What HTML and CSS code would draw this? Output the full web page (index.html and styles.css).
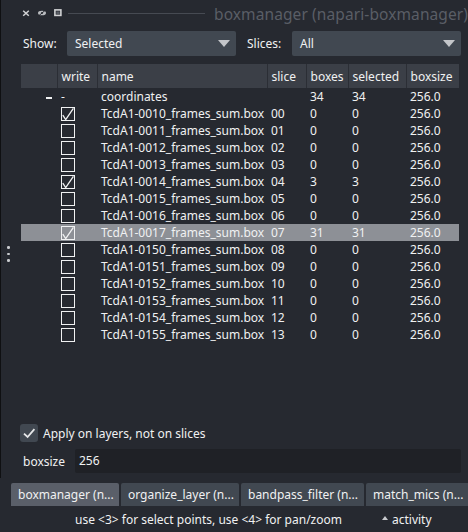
FILE: index.html
```html
<!DOCTYPE html>
<html>
<head>
<meta charset="utf-8">
<link rel="stylesheet" href="styles.css">
</head>
<body>
<div class="app">
  <div class="dock">
    <div class="titlebar">
      <svg class="tb-ic tb-close" width="8" height="8" viewBox="0 0 8 8"><path d="M1.2 1.8L6.8 6.8M6.8 1.8L1.2 6.8" stroke="#d1d2d4" stroke-width="1.5"/></svg>
      <svg class="tb-ic tb-eye" width="10" height="8" viewBox="0 0 10 8"><ellipse cx="5" cy="4" rx="4" ry="2.3" fill="#b9bbbf"/><path d="M2 6.5L8 1.5" stroke="#262930" stroke-width="1"/><circle cx="5" cy="4" r="1" fill="#262930"/></svg>
      <svg class="tb-ic tb-float" width="8" height="8" viewBox="0 0 8 8"><rect x="0.9" y="0.9" width="6" height="5.5" fill="none" stroke="#d1d2d4" stroke-width="1.6"/><rect x="2.3" y="2.4" width="3.4" height="2.6" fill="#5a5e66"/></svg>
      <span class="tb-line"></span>
      <span class="tb-title">boxmanager (napari-boxmanager)</span>
    </div>

    <div class="filters">
      <span class="lbl">Show:</span>
      <div class="combo"><span class="combo-text">Selected</span><i class="arrow"></i></div>
      <span class="lbl lbl2">Slices:</span>
      <div class="combo"><span class="combo-text">All</span><i class="arrow"></i></div>
    </div>

    <table class="grid">
      <colgroup>
        <col class="c-vh"><col class="c-write"><col class="c-name"><col class="c-slice"><col class="c-boxes"><col class="c-sel"><col class="c-size">
      </colgroup>
      <thead>
        <tr><th></th><th>write</th><th>name</th><th>slice</th><th>boxes</th><th>selected</th><th>boxsize</th></tr>
      </thead>
      <tbody>
        <tr><td class="vh"><span class="minus"></span></td><td>-</td><td>coordinates</td><td></td><td>34</td><td>34</td><td>256.0</td></tr>
        <tr><td class="vh"></td><td><span class="cb"><svg width="14" height="14" viewBox="0 0 14 14"><path d="M1.8 8.2L4.7 12.5L12.4 1.4" fill="none" stroke="#f0f1f2" stroke-width="1.3"/></svg></span></td><td>TcdA1-0010_frames_sum.box</td><td>00</td><td>0</td><td>0</td><td>256.0</td></tr>
        <tr><td class="vh"></td><td><span class="cb"></span></td><td>TcdA1-0011_frames_sum.box</td><td>01</td><td>0</td><td>0</td><td>256.0</td></tr>
        <tr><td class="vh"></td><td><span class="cb"></span></td><td>TcdA1-0012_frames_sum.box</td><td>02</td><td>0</td><td>0</td><td>256.0</td></tr>
        <tr><td class="vh"></td><td><span class="cb"></span></td><td>TcdA1-0013_frames_sum.box</td><td>03</td><td>0</td><td>0</td><td>256.0</td></tr>
        <tr><td class="vh"></td><td><span class="cb"><svg width="14" height="14" viewBox="0 0 14 14"><path d="M1.8 8.2L4.7 12.5L12.4 1.4" fill="none" stroke="#f0f1f2" stroke-width="1.3"/></svg></span></td><td>TcdA1-0014_frames_sum.box</td><td>04</td><td>3</td><td>3</td><td>256.0</td></tr>
        <tr><td class="vh"></td><td><span class="cb"></span></td><td>TcdA1-0015_frames_sum.box</td><td>05</td><td>0</td><td>0</td><td>256.0</td></tr>
        <tr><td class="vh"></td><td><span class="cb"></span></td><td>TcdA1-0016_frames_sum.box</td><td>06</td><td>0</td><td>0</td><td>256.0</td></tr>
        <tr class="selected"><td class="vh"></td><td><span class="cb"><svg width="14" height="14" viewBox="0 0 14 14"><path d="M1.8 8.2L4.7 12.5L12.4 1.4" fill="none" stroke="#f0f1f2" stroke-width="1.3"/></svg></span></td><td>TcdA1-0017_frames_sum.box</td><td>07</td><td>31</td><td>31</td><td>256.0</td></tr>
        <tr><td class="vh"></td><td><span class="cb"></span></td><td>TcdA1-0150_frames_sum.box</td><td>08</td><td>0</td><td>0</td><td>256.0</td></tr>
        <tr><td class="vh"></td><td><span class="cb"></span></td><td>TcdA1-0151_frames_sum.box</td><td>09</td><td>0</td><td>0</td><td>256.0</td></tr>
        <tr><td class="vh"></td><td><span class="cb"></span></td><td>TcdA1-0152_frames_sum.box</td><td>10</td><td>0</td><td>0</td><td>256.0</td></tr>
        <tr><td class="vh"></td><td><span class="cb"></span></td><td>TcdA1-0153_frames_sum.box</td><td>11</td><td>0</td><td>0</td><td>256.0</td></tr>
        <tr><td class="vh"></td><td><span class="cb"></span></td><td>TcdA1-0154_frames_sum.box</td><td>12</td><td>0</td><td>0</td><td>256.0</td></tr>
        <tr><td class="vh"></td><td><span class="cb"></span></td><td>TcdA1-0155_frames_sum.box</td><td>13</td><td>0</td><td>0</td><td>256.0</td></tr>
      </tbody>
    </table>

    <div class="spacer"></div>

    <div class="apply">
      <span class="bigcb"><svg width="18" height="18" viewBox="0 0 18 18"><path d="M4 9.6L7.6 13L14.4 5.2" fill="none" stroke="#e6e7e9" stroke-width="1.8"/></svg></span>
      <span>Apply on layers, not on slices</span>
    </div>

    <div class="bsrow">
      <span class="bslabel">boxsize</span>
      <div class="input">256</div>
    </div>

    <div class="handle"><i></i><i></i><i></i></div>
  </div>

  <div class="tabs">
    <div class="tab active t1">boxmanager (n...</div>
    <div class="tab t2">organize_layer (n...</div>
    <div class="tab t3">bandpass_filter (n...</div>
    <div class="tab t4">match_mics (n...</div>
  </div>

  <div class="status">
    <span class="hint">use &lt;3&gt; for select points, use &lt;4&gt; for pan/zoom</span>
    <span class="activity"><i class="up"></i>activity</span>
  </div>
</div>
</body>
</html>
```

FILE: styles.css
```css
* { box-sizing: border-box; }
html, body { margin: 0; padding: 0; }
body {
  background: #262930;
  color: #f0f1f2;
  font-family: "Noto Sans", "Open Sans", "DejaVu Sans", sans-serif;
  font-size: 12px;
  width: 468px;
  height: 532px;
  overflow: hidden;
}
.app { display: flex; flex-direction: column; height: 532px; }

.dock {
  position: relative;
  height: 478px;
  border-left: 1px solid #0f1012;
  display: flex;
  flex-direction: column;
}

.titlebar {
  height: 26px;
  display: flex;
  align-items: center;
  padding-left: 21px;
  white-space: nowrap;
  overflow: hidden;
}
.tb-ic { display: block; flex: none; }
.tb-eye { margin-left: 7px; }
.tb-float { margin-left: 7px; }
.tb-line {
  flex: none;
  width: 137px;
  height: 1px;
  background: #464a52;
  margin-left: 6px;
}
.tb-title {
  margin-left: 9px;
  font-size: 15.5px;
  letter-spacing: 0.1px;
  color: #5a5e66;
  margin-top: 2px;
}

.filters {
  display: flex;
  align-items: center;
  height: 25px;
  margin-top: 5px;
  padding-left: 22px;
}
.lbl { width: 44px; flex: none; }
.lbl2 { width: 45px; margin-left: 11px; }
.combo {
  flex: none;
  width: 169px;
  height: 25px;
  background: #414851;
  border-radius: 2px;
  display: flex;
  align-items: center;
  padding-left: 8px;
}
.combo-text { flex: 1; }
.arrow {
  width: 0;
  height: 0;
  border-left: 6.5px solid transparent;
  border-right: 6.5px solid transparent;
  border-top: 7px solid #c4c6ca;
  margin-right: 6px;
}

.grid {
  margin-top: 8px;
  margin-left: 20px;
  border-collapse: collapse;
  table-layout: fixed;
  width: 438px;
}
.c-vh { width: 36px; }
.c-write { width: 40px; }
.c-name { width: 170px; }
.c-slice { width: 39px; }
.c-boxes { width: 42px; }
.c-sel { width: 58px; }
.c-size { width: 53px; }

.grid th {
  height: 24px;
  background: #3b3f47;
  font-weight: normal;
  text-align: left;
  padding: 0 0 0 4px;
  border-right: 1px solid #2b2e35;
  white-space: nowrap;
}
.grid th:last-child { border-right: none; }
.grid td {
  height: 17px;
  padding: 0 0 0 4px;
  line-height: 17px;
  white-space: nowrap;
  overflow: hidden;
  vertical-align: middle;
}
.grid td.vh { text-align: right; padding: 0 5px 0 0; }
.minus {
  display: inline-block;
  width: 6px;
  height: 1.5px;
  background: #f0f1f2;
  vertical-align: middle;
}
.grid tr.selected td { background: #8d9096; }
.cb {
  display: block;
  width: 14px;
  height: 14px;
  border: 1px solid #f0f1f2;
  position: relative;
}
.cb svg { display: block; position: absolute; left: -1px; top: -1px; }

.spacer { flex: 1; }

.apply {
  display: flex;
  align-items: center;
  height: 18px;
  padding-left: 19px;
  gap: 5px;
}
.bigcb {
  width: 18px;
  height: 18px;
  background: #414851;
  border-radius: 3px;
  display: block;
}
.bigcb svg { display: block; }

.bsrow {
  display: flex;
  align-items: center;
  margin-top: 7px;
  padding-left: 22px;
  margin-bottom: 5px;
}
.bslabel { width: 52px; flex: none; }
.input {
  width: 386px;
  height: 24px;
  background: #1f2126;
  border-radius: 2px;
  line-height: 24px;
  padding-left: 4px;
}

.handle {
  position: absolute;
  left: 6px;
  top: 246px;
  display: flex;
  flex-direction: column;
  gap: 4px;
}
.handle i {
  display: block;
  width: 2.5px;
  height: 2.5px;
  border-radius: 50%;
  background: #c9cbce;
}

.tabs {
  display: flex;
  margin-top: 5px;
  height: 23px;
  padding-left: 11px;
  gap: 2px;
  white-space: nowrap;
  overflow: hidden;
}
.tab {
  flex: none;
  height: 23px;
  line-height: 23px;
  background: #414851;
  border-radius: 2px 2px 0 0;
  padding-left: 7px;
}
.tab.active { background: #5a5f69; }
.t1 { width: 108px; }
.t2 { width: 118px; }
.t3 { width: 123px; }
.t4 { width: 110px; }

.status {
  height: 26px;
  display: flex;
  align-items: center;
  padding-left: 75px;
  white-space: nowrap;
}
.hint { width: 307px; }
.activity { display: flex; align-items: center; }
.up {
  width: 0;
  height: 0;
  border-left: 3.5px solid transparent;
  border-right: 3.5px solid transparent;
  border-bottom: 4px solid #c9cbce;
  margin-right: 4px;
  margin-top: -2px;
}
```
